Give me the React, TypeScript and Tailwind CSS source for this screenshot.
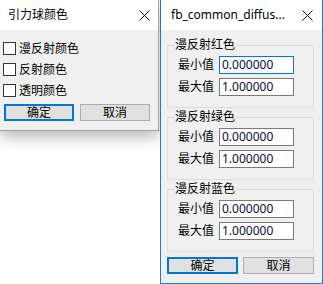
import React from "react";

const font = { fontFamily: '"Noto Sans", "Noto Sans CJK SC", sans-serif' };

function CloseX() {
  return (
    <svg width="11" height="11" viewBox="0 0 11 11">
      <path d="M0.5 0.5 L10.5 10.5 M10.5 0.5 L0.5 10.5" stroke="#111" strokeWidth="1" fill="none" />
    </svg>
  );
}

function Check({ label }: { label: string }) {
  return (
    <div className="flex items-center h-[21px]">
      <div className="w-[13px] h-[13px] border border-[#333] bg-white ml-[3px]" />
      <span className="ml-[3px] text-[12px] leading-[16px] text-black">{label}</span>
    </div>
  );
}

function Btn({ label, def, w }: { label: string; def?: boolean; w: string }) {
  return (
    <div
      className={
        (def ? "border-2 border-[#0078d7] " : "border border-[#adadad] ") +
        "h-[17px] bg-[#e1e1e1] flex items-center justify-center text-[12px] leading-[14px] text-black " +
        w
      }
    >
      {label}
    </div>
  );
}

function Field({ label, value, focus }: { label: string; value: string; focus?: boolean }) {
  return (
    <div className="flex items-center h-[18px]">
      <span className="w-[51px] shrink-0 pl-[10px] text-[12px] leading-[16px] text-black whitespace-nowrap">{label}</span>
      <div
        className={
          "w-[75px] h-[18px] bg-white border flex items-center pl-[2px] text-[12px] leading-[14px] text-[#0a0a3c] " +
          (focus ? "border-[#0078d7]" : "border-[#7a7a7a]")
        }
      >
        {value}
      </div>
    </div>
  );
}

function Group({ title, focus }: { title: string; focus?: boolean }) {
  return (
    <div className="relative border border-[#dcdcdc] h-[63px] w-[147px]">
      <span className="absolute -top-[9px] left-[6px] bg-[#f0f0f0] px-[1px] text-[12px] leading-[16px] text-black">
        {title}
      </span>
      <div className="flex flex-col gap-[4px] pt-[10px]">
        <Field label="最小值" value="0.000000" focus={focus} />
        <Field label="最大值" value="1.000000" />
      </div>
    </div>
  );
}

export default function App() {
  return (
    <div className="relative w-[323px] h-[284px] bg-white overflow-hidden" style={font}>
      {/* left window */}
      <div className="absolute left-0 top-0 w-[159px] h-[131px] flex flex-col border-r border-b border-[#a0a0a0] shadow-[0_6px_14px_rgba(0,0,0,0.28)] bg-[#f0f0f0]">
        <div className="h-[30px] bg-white flex items-center justify-between pl-[8px] pr-[8px]">
          <span className="text-[12px] leading-[16px] text-black">引力球颜色</span>
          <CloseX />
        </div>
        <div className="flex flex-col pt-[8px]">
          <Check label="漫反射颜色" />
          <Check label="反射颜色" />
          <Check label="透明颜色" />
        </div>
        <div className="flex gap-[6px] pl-[4px] mt-[3px]">
          <Btn label="确定" def w="w-[70px]" />
          <Btn label="取消" w="w-[70px]" />
        </div>
      </div>

      {/* right window */}
      <div className="absolute left-[160px] top-0 w-[163px] h-[284px] flex flex-col border-l border-r border-b border-[#1a7ad4] bg-[#f0f0f0]">
        <div className="h-[30px] bg-white flex items-center justify-between pl-[10px] pr-[9px]">
          <span className="text-[12px] leading-[16px] text-black">fb_common_diffus...</span>
          <CloseX />
        </div>
        <div className="flex flex-col pl-[6px] pt-[15px] gap-[9px]">
          <Group title="漫反射红色" focus />
          <Group title="漫反射绿色" />
          <Group title="漫反射蓝色" />
        </div>
        <div className="flex gap-[5px] pl-[6px] mt-[5px]">
          <Btn label="确定" def w="w-[71px]" />
          <Btn label="取消" w="w-[71px]" />
        </div>
      </div>
    </div>
  );
}
